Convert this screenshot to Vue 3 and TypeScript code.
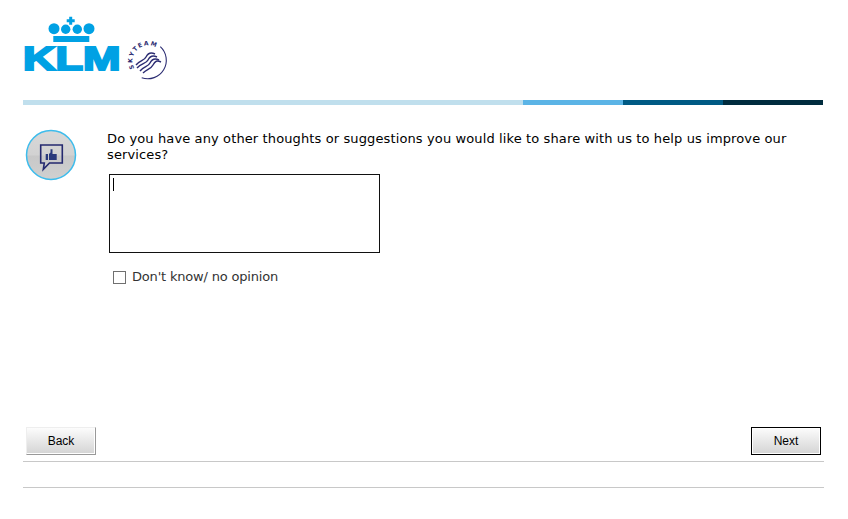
<script setup lang="ts">
const segments: string[] = ['seg-a', 'seg-b', 'seg-c', 'seg-d']
</script>

<template>
  <div class="page">
    <header class="logo-row">
      <div class="klm">
        <svg class="crown" width="60" height="31" viewBox="0 0 60 31" aria-hidden="true">
          <g fill="#00a1e4">
            <path d="M25.200 0.700h3v2.500h2.500v3h-2.500v2.500h-3v-2.500h-2.500v-3h2.500z" />
            <circle cx="10" cy="12.700" r="5.500" />
            <circle cx="21.700" cy="13.300" r="4.700" />
            <circle cx="33.300" cy="13.300" r="4.700" />
            <circle cx="45" cy="12.700" r="5.500" />
            <rect x="9.300" y="20" width="36" height="6" />
          </g>
        </svg>
        <span class="klm-text">KLM</span>
      </div>
      <svg class="skyteam" width="46" height="46" viewBox="0 0 46 46" aria-hidden="true">
        <path d="M38.300 5.600A18.500 18.500 0 0 1 19.700 36.700" fill="none" stroke="#2b2c72" stroke-width="1.100" />
        <g fill="none" stroke="#2b2c72" stroke-width="1.400">
          <path d="M14 24c4-5 8-4 10-8s5-5 9-3" />
          <path d="M15 27c4-5 9-4 11-8s5-5 9-3" />
          <path d="M18 30c4-5 8-4 10-8s5-5 9-3" />
          <path d="M21 32c4-4 8-4 10-8s4-5 8-3" />
        </g>
        <defs>
          <path id="sky-arc" d="M12.400 27.300A15.500 15.500 0 0 1 36 8" />
        </defs>
        <text class="sky-text"><textPath href="#sky-arc">SKYTEAM</textPath></text>
      </svg>
    </header>

    <div class="bar">
      <div v-for="s in segments" :key="s" :class="['seg', s]"></div>
    </div>

    <main class="question">
      <div class="icon">
        <svg width="52" height="52" viewBox="0 0 52 52" aria-hidden="true">
          <defs>
            <linearGradient id="disc" x1="0" y1="0" x2="0" y2="1">
              <stop offset="0" stop-color="#d8d8d8" />
              <stop offset="0.5" stop-color="#d2d2d2" />
              <stop offset="0.52" stop-color="#c8c8c8" />
              <stop offset="1" stop-color="#d0d0d0" />
            </linearGradient>
          </defs>
          <circle cx="26" cy="26" r="24.500" fill="url(#disc)" stroke="#3dbcec" stroke-width="1.500" />
          <path d="M15.700 16h21.600v18h-12.800l-6.200 6.300 1-6.300h-3.600z" fill="none" stroke="#25296f" stroke-width="1.600" stroke-linejoin="miter" />
          <path d="M20.700 25h2.300v6h-2.300zM24 25l1.500-1.500v-3.200h2v4.700h4.200v6h-7.700z" fill="#2a3a7c" />
        </svg>
      </div>
      <div class="body">
        <p class="prompt">Do you have any other thoughts or suggestions you would like to share with us to help us improve our services?</p>
        <div class="field">
          <textarea class="answer" readonly></textarea>
          <span class="caret"></span>
        </div>
        <label class="dk">
          <input type="checkbox" class="box" />
          <span>Don't know/ no opinion</span>
        </label>
      </div>
    </main>

    <nav class="actions">
      <button class="btn back" type="button">Back</button>
      <button class="btn next" type="button">Next</button>
    </nav>
    <hr class="rule first" />
    <hr class="rule second" />
  </div>
</template>

<style>
html, body { margin: 0; background: #fff; }
</style>

<style scoped>
.page {
  width: 848px;
  height: 519px;
  box-sizing: border-box;
  padding: 16px 24px 0 23px;
  display: flex;
  flex-direction: column;
  overflow: hidden;
  font-family: "DejaVu Sans", Verdana, sans-serif;
  background: #fff;
}
.logo-row {
  height: 84px;
  display: flex;
  align-items: flex-start;
}
.klm {
  width: 97px;
  display: flex;
  flex-direction: column;
  align-items: flex-start;
}
.crown {
  display: block;
  margin-left: 21px;
}
.klm-text {
  font-family: "Liberation Sans", Arial, sans-serif;
  font-weight: 700;
  font-size: 32.500px;
  line-height: 25px;
  color: #00a1e4;
  -webkit-text-stroke: 2px #00a1e4;
  margin-left: 0;
  transform: scaleX(1.385);
  transform-origin: left center;
}
.skyteam {
  margin-left: 2px;
  margin-top: 25px;
  overflow: visible;
}
.sky-text {
  font-family: "DejaVu Sans", sans-serif;
  font-size: 6px;
  font-weight: 700;
  letter-spacing: 1.300px;
  fill: #2b2c72;
}
.bar {
  width: 800px;
  height: 5px;
  display: flex;
}
.seg { width: 100px; }
.seg-a { width: 500px; background: #c0dfed; }
.seg-b { background: #5bb4e6; }
.seg-c { background: #005a84; }
.seg-d { background: #002c3e; }
.question {
  display: flex;
  height: 322px;
  padding-top: 24px;
  box-sizing: border-box;
}
.icon {
  width: 84px;
  flex: none;
  padding-left: 2px;
  box-sizing: border-box;
}
.icon svg { display: block; }
.body { flex: 1; }
.prompt {
  margin: 2px 25px 0 0;
  font-size: 13px;
  line-height: 16px;
  letter-spacing: 0.120px;
  color: #000;
}
.field {
  position: relative;
  margin: 11px 0 0 2px;
  width: 271px;
  height: 79px;
}
.answer {
  display: block;
  width: 100%;
  height: 100%;
  box-sizing: border-box;
  margin: 0;
  border: 1px solid #111;
  resize: none;
  outline: none;
  background: #fff;
}
.caret {
  position: absolute;
  left: 4px;
  top: 4px;
  width: 1px;
  height: 13px;
  background: #000;
}
.dk {
  display: flex;
  align-items: center;
  margin: 16px 0 0 6px;
  font-size: 13px;
  line-height: 16px;
  letter-spacing: -0.180px;
  color: #333;
}
.box {
  appearance: none;
  width: 13px;
  height: 13px;
  box-sizing: border-box;
  margin: 0 6px 0 0;
  border: 1px solid #707070;
  background: #fff;
}
.actions {
  display: flex;
  justify-content: space-between;
  padding: 0 3px 0 3px;
}
.btn {
  width: 70px;
  height: 28px;
  box-sizing: border-box;
  padding: 0;
  font-family: "Liberation Sans", Arial, sans-serif;
  font-size: 12px;
  color: #000;
  background: linear-gradient(#fcfcfc, #d4d4d4);
}
.back {
  border: 1px solid;
  border-color: #eee #999 #999 #eee;
  box-shadow: inset -1px -1px 0 #fff;
}
.next { border: 1px solid #000; box-shadow: inset 0 0 0 1px #fff; }
.rule {
  width: 801px;
  height: 1px;
  margin: 0;
  border: none;
  background: #c8c8c8;
}
.first { margin-top: 6px; }
.second { margin-top: 25px; }
</style>
